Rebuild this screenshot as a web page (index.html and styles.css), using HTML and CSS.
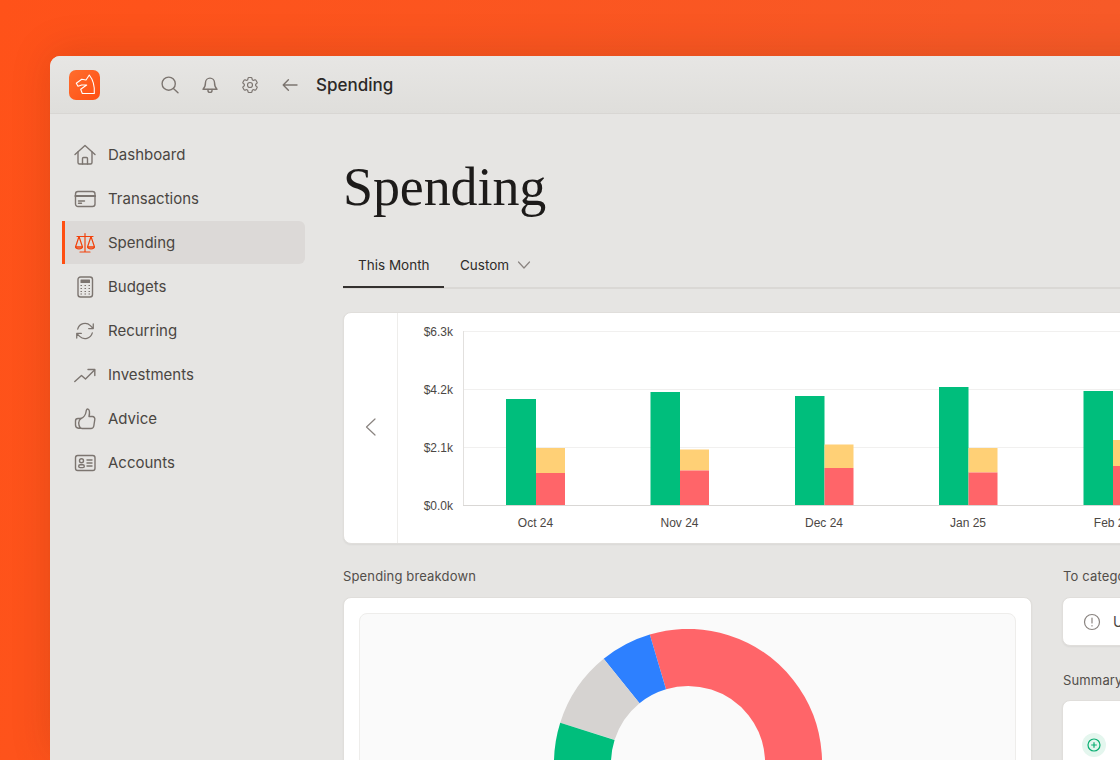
FILE: index.html
```html
<!DOCTYPE html>
<html>

<head>
  <meta charset="utf-8">
  <title>Spending</title>
  <link rel="stylesheet" href="styles.css">
</head>

<body>
  <div class="window">
    <header class="titlebar">
      <div class="logo">
        <svg width="31" height="30" viewBox="0 0 31 30"><path d="M20.300 5 17 10 12.700 9.300 7.300 13.300 9 16.300 12.700 15 17.700 15 11.700 19.300 13.300 23.500H25.300C25.800 16 24.300 10 20.300 5Z" fill="none" stroke="#fff" stroke-width="1.100" stroke-linejoin="round"/></svg>
      </div>
      <div class="tools">
        <svg class="icon" width="20" height="20" viewBox="0 0 20 20"><circle cx="8.700" cy="8.700" r="6.600"/><path d="M13.400 13.500 18 17.800"/></svg>
        <svg class="icon" width="20" height="20" viewBox="0 0 20 20"><path d="M3 14.200c1.800-1.600 2.500-3.400 2.500-6.600a4.500 4.500 0 0 1 9 0c0 3.200.7 5 2.500 6.600Z"/><path d="M8 14.400v1a2 2 0 0 0 4 0v-1"/></svg>
        <svg class="icon" width="20" height="20" viewBox="0 0 24 24"><path d="M9.594 3.940c.09-.542.56-.94 1.110-.94h2.593c.55 0 1.020.398 1.110.94l.213 1.281c.063.374.313.686.645.87.074.04.147.083.22.127.325.196.72.257 1.075.124l1.217-.456a1.125 1.125 0 0 1 1.370.49l1.296 2.247a1.125 1.125 0 0 1-.26 1.431l-1.003.827c-.293.241-.438.613-.43.992a7.723 7.723 0 0 1 0 .255c-.008.378.137.75.43.991l1.004.827c.424.35.534.955.26 1.430l-1.298 2.247a1.125 1.125 0 0 1-1.369.491l-1.217-.456c-.355-.133-.75-.072-1.076.124a6.470 6.470 0 0 1-.22.128c-.331.183-.581.495-.644.869l-.213 1.281c-.09.543-.56.94-1.110.94h-2.594c-.55 0-1.019-.398-1.110-.94l-.213-1.281c-.062-.374-.312-.686-.644-.87a6.520 6.520 0 0 1-.22-.127c-.325-.196-.72-.257-1.076-.124l-1.217.456a1.125 1.125 0 0 1-1.369-.49l-1.297-2.247a1.125 1.125 0 0 1 .26-1.431l1.004-.827c.292-.24.437-.613.43-.991a6.932 6.932 0 0 1 0-.255c.007-.38-.138-.751-.43-.992l-1.004-.827a1.125 1.125 0 0 1-.26-1.430l1.297-2.247a1.125 1.125 0 0 1 1.370-.491l1.216.456c.356.133.751.072 1.076-.124.072-.044.146-.086.22-.128.332-.183.582-.495.644-.869l.214-1.280Z"/><circle cx="12" cy="12" r="3"/></svg>
        <svg class="icon" width="20" height="20" viewBox="0 0 20 20"><path d="M17 10H3.200M8.400 4.800 3.200 10l5.200 5.200"/></svg>
      </div>
      <div class="page-name">Spending</div>
    </header>

    <div class="layout">
      <nav class="sidebar">
        <a class="nav-item">
          <svg class="icon" width="22" height="22" viewBox="0 0 22 22"><path d="M1 10.500 11 1.500l10 9"/><path d="M4 8v10.500A1.500 1.500 0 0 0 5.500 20h11a1.500 1.500 0 0 0 1.500-1.500V8"/><path d="M8.500 20v-5.500a1 1 0 0 1 1-1h3a1 1 0 0 1 1 1V20"/></svg>
          Dashboard
        </a>
        <a class="nav-item">
          <svg class="icon" width="22" height="22" viewBox="0 0 22 22"><rect x="1.500" y="3.500" width="19.500" height="15" rx="2.500"/><path d="M1.500 8h19.500" stroke-width="2.200"/><path d="M4.500 13h6M4.500 15.200h3"/></svg>
          Transactions
        </a>
        <a class="nav-item active">
          <svg class="icon" width="22" height="22" viewBox="0 0 22 22"><path d="M11 1.500v18M3 4.500h16M6 20h10"/><path d="M5 4.500 1.500 15h7ZM17 4.500 13.500 15h7Z"/><path d="M1.500 15c.4 2.600 6.600 2.600 7 0ZM13.500 15c.4 2.600 6.600 2.600 7 0Z"/></svg>
          Spending
        </a>
        <a class="nav-item">
          <svg class="icon" width="22" height="22" viewBox="0 0 22 22"><rect x="4" y="1" width="14.500" height="20" rx="2.500"/><rect class="fill" x="6.500" y="3.500" width="9.500" height="3.500" rx=".5"/><path class="dots" d="M6.500 9.500h1.500M10.500 9.500h1.500M14.500 9.500h1.500M6.500 12.500h1.500M10.500 12.500h1.500M14.500 12.500h1.500M6.500 15.500h1.500M10.500 15.500h1.500M14.500 15.500h1.500M6.500 18h1.500M10.500 18h1.500M14.500 18h1.500"/></svg>
          Budgets
        </a>
        <a class="nav-item">
          <svg class="icon" width="22" height="22" viewBox="0 0 24 24"><path d="M16.023 9.348h4.992v-.001M2.985 19.644v-4.992m0 0h4.992m-4.993 0 3.181 3.183a8.250 8.250 0 0 0 13.803-3.700M4.031 9.865a8.250 8.250 0 0 1 13.803-3.700l3.181 3.182m0-4.991v4.990"/></svg>
          Recurring
        </a>
        <a class="nav-item">
          <svg class="icon" width="22" height="22" viewBox="0 0 22 22"><path d="M.8 17.500 7.500 11.500l4 3.500 9-9"/><path d="M14 5.500h6.800v6"/></svg>
          Investments
        </a>
        <a class="nav-item">
          <svg class="icon" width="22" height="22" viewBox="0 0 22 22"><path d="M7 10.500c2.500-1 4.500-3.500 5-6.500.3-2 .5-3 1.500-3 2 0 2.500 3 1.500 7.500h3.500a2.500 2.500 0 0 1 2.300 3l-1 6.500a3 3 0 0 1-3 2.500H9c-1.500 0-2.500-.8-3.500-.8"/><path d="M7 10.500H4A2.500 2.500 0 0 0 1.500 13v4a3.200 3.200 0 0 0 3 3.200h1.800C5.200 18.500 4.700 17 4.700 15s.8-3.500 2.300-4.500Z"/></svg>
          Advice
        </a>
        <a class="nav-item">
          <svg class="icon" width="22" height="22" viewBox="0 0 22 22"><rect x="1.500" y="3.500" width="19.500" height="15" rx="2.200"/><circle cx="7.500" cy="8.700" r="2"/><rect x="4.700" y="12.800" width="5.600" height="2.800" rx="1.400"/><path d="M13 8h5M13 11h5M13 14h5"/></svg>
          Accounts
        </a>
      </nav>

      <main class="content">
        <h1 class="title">Spending</h1>

        <div class="tabs">
          <div class="tab selected">This Month</div>
          <div class="tab">
            Custom
            <svg class="icon thin" width="14" height="14" viewBox="0 0 14 14"><path d="M1.500 4 7 10 12.500 4"/></svg>
          </div>
        </div>

        <section class="card chart-card">
          <div class="chart-prev">
            <svg class="icon thin" width="12" height="20" viewBox="0 0 12 20"><path d="M10 2 1.500 10 10 18"/></svg>
          </div>
          <!-- viewBox is in page px so bars are easy to read off -->
          <svg class="chart" width="944" height="230" viewBox="398 313 944 230">
            <path class="grid" d="M463 331.500H1342M463 389.500H1342M463 447.500H1342"/>
            <path class="axis" d="M463.500 331V505"/>
            <text class="y-label" x="453" y="336">$6.3k</text>
            <text class="y-label" x="453" y="394">$4.2k</text>
            <text class="y-label" x="453" y="452">$2.1k</text>
            <text class="y-label" x="453" y="510">$0.0k</text>

            <rect class="green" x="506" y="399" width="30" height="106"/>
            <rect class="yellow" x="536" y="448" width="29" height="25"/>
            <rect class="red" x="536" y="473" width="29" height="32"/>
            <text class="x-label" x="535.500" y="527">Oct 24</text>

            <rect class="green" x="650.500" y="392" width="29.500" height="113"/>
            <rect class="yellow" x="680" y="449.500" width="29" height="21"/>
            <rect class="red" x="680" y="470.500" width="29" height="34.500"/>
            <text class="x-label" x="679.500" y="527">Nov 24</text>

            <rect class="green" x="795" y="396" width="29.500" height="109"/>
            <rect class="yellow" x="824.500" y="444.500" width="29" height="23.500"/>
            <rect class="red" x="824.500" y="468" width="29" height="37"/>
            <text class="x-label" x="824" y="527">Dec 24</text>

            <rect class="green" x="939" y="387" width="29.500" height="118"/>
            <rect class="yellow" x="968.500" y="448" width="29" height="24.500"/>
            <rect class="red" x="968.500" y="472.500" width="29" height="32.500"/>
            <text class="x-label" x="968" y="527">Jan 25</text>

            <rect class="green" x="1083.500" y="391" width="29.500" height="114"/>
            <rect class="yellow" x="1113" y="440" width="29" height="26"/>
            <rect class="red" x="1113" y="466" width="29" height="39"/>
            <text class="x-label" x="1112.500" y="527">Feb 25</text>

            <path class="baseline" d="M463 505.500H1342"/>
          </svg>
        </section>

        <div class="lower">
          <div>
            <div class="section-label">Spending breakdown</div>
            <section class="card breakdown">
              <div class="donut-panel">
                <svg class="donut" width="268" height="268" viewBox="0 0 268 268">
                  <path stroke="#ff6569" d="M103.900 32.900A105.500 105.500 0 0 1 225.400 186.800"/>
                  <path stroke="#2d80ff" d="M103.900 32.900A105.500 105.500 0 0 0 67.600 52"/>
                  <path stroke="#d6d3d1" d="M67.600 52A105.500 105.500 0 0 0 33.400 102.300"/>
                  <path stroke="#00be7c" d="M33.400 102.300A105.500 105.500 0 0 0 42.600 186.800"/>
                </svg>
              </div>
            </section>
          </div>

          <div class="side">
            <div class="section-label">To categorize</div>
            <section class="card todo">
              <svg class="icon thin" width="18" height="18" viewBox="0 0 18 18"><circle cx="9" cy="9" r="7.500"/><path d="M9 5v5M9 12.500v.5"/></svg>
              Uncategorized
            </section>
            <div class="section-label summary-label">Summary</div>
            <section class="card summary">
              <div class="plus-badge">
                <svg width="14" height="14" viewBox="0 0 14 14"><circle cx="7" cy="7" r="6"/><path d="M7 4.200v5.600M4.200 7h5.600"/></svg>
              </div>
            </section>
          </div>
        </div>
      </main>
    </div>
  </div>
</body>

</html>
```

FILE: styles.css
```css
body {
  margin: 0;
  height: 760px;
  padding: 56px 0 0 50px;
  box-sizing: border-box;
  overflow: hidden;
  background: linear-gradient(100deg, #ff5219, #f65b2a);
  font-family: Inter, "Liberation Sans", sans-serif;
  color: #4a4642;
}

.window {
  width: 1400px;
  height: 704px;
  overflow: hidden;
  background-color: #e6e5e3;
  border-radius: 10px 0 0 0;
  box-shadow: 0 -4px 40px rgba(90, 30, 0, 0.16);
}

.icon {
  flex: none;
  fill: none;
  stroke: #7c7570;
  stroke-width: 1.4;
  stroke-linecap: round;
  stroke-linejoin: round;
}

.icon.thin {
  stroke: #8a8480;
  stroke-width: 1.2;
}

.icon .fill {
  fill: #7c7570;
  stroke: none;
}

.icon .dots {
  stroke-width: 1.2;
  stroke-linecap: butt;
}

/* top bar */
.titlebar {
  display: flex;
  align-items: center;
  box-sizing: border-box;
  height: 58px;
  padding-left: 19px;
  background: linear-gradient(#e7e6e4, #dfdedb);
  border-bottom: 1px solid #d8d6d3;
}

.logo {
  display: flex;
  width: 31px;
  height: 30px;
  border-radius: 7px;
  background: linear-gradient(135deg, #ff6d2e, #ff4f12);
}

.tools {
  display: flex;
  gap: 20px;
  margin-left: 60px;
}

.page-name {
  margin-left: 16px;
  font-size: 17px;
  font-weight: 500;
  color: #2b2927;
}

/* sidebar */
.layout {
  display: flex;
}

.sidebar {
  flex: none;
  display: flex;
  flex-direction: column;
  gap: 1px;
  box-sizing: border-box;
  width: 293px;
  padding: 19px 38px 0 12px;
}

.nav-item {
  display: flex;
  align-items: center;
  gap: 12px;
  height: 43px;
  padding-left: 9px;
  border-left: 3px solid transparent;
  border-radius: 0 6px 6px 0;
  font-size: 15px;
}

.nav-item.active {
  background-color: #dcd9d7;
  border-left-color: #ff4f12;
}

.nav-item.active .icon {
  stroke: #f2420c;
  stroke-width: 1.2;
}

/* main column */
.content {
  flex: none;
  width: 1000px;
}

.title {
  margin: 43px 0 25px;
  font-family: "Liberation Serif", serif;
  font-size: 54px;
  font-weight: 400;
  line-height: 60px;
  letter-spacing: -0.1px;
  color: #1d1b1a;
}

.tabs {
  display: flex;
  gap: 1px;
  height: 45px;
  border-bottom: 2px solid #dad8d5;
}

.tab {
  display: flex;
  align-items: center;
  gap: 8px;
  height: 46px;
  padding: 0 15px;
  font-size: 13.5px;
  color: #2f2c2a;
}

.tab.selected {
  box-sizing: border-box;
  width: 101px;
  padding-top: 2px;
  white-space: nowrap;
  border-bottom: 2px solid #34312f;
}

.card {
  background-color: #fff;
  border: 1px solid #e0dedb;
  border-radius: 8px;
  box-shadow: 0 1px 2px rgba(0, 0, 0, 0.06);
}

.chart-card {
  display: flex;
  height: 230px;
  margin-top: 23px;
}

.chart-prev {
  flex: none;
  display: flex;
  align-items: center;
  justify-content: center;
  box-sizing: border-box;
  width: 54px;
  padding-bottom: 2px;
  border-right: 1px solid #eeedeb;
}

.chart {
  display: block;
}

.chart text {
  font-family: "Liberation Sans", sans-serif;
  font-size: 12px;
  fill: #4b4744;
}

.chart .y-label {
  text-anchor: end;
}

.chart .x-label {
  text-anchor: middle;
}

.grid {
  fill: none;
  stroke: #f1f0ef;
}

.axis {
  fill: none;
  stroke: #e2e0de;
}

.baseline {
  fill: none;
  stroke: #d9d7d5;
}

.green {
  fill: #00be7c;
}

.yellow {
  fill: #ffd076;
}

.red {
  fill: #ff6569;
}

/* lower part */
.lower {
  display: grid;
  grid-template-columns: 689px 281px;
  gap: 30px;
  margin-top: 24px;
}

.section-label {
  margin-bottom: 13px;
  font-size: 13px;
  line-height: 16px;
  letter-spacing: 0.15px;
  color: #524e4a;
}

.side .section-label {
  margin-left: 1px;
}

.side .summary-label {
  margin-bottom: 12px;
}

.breakdown {
  height: 400px;
  padding: 15px;
  box-sizing: border-box;
}

.donut-panel {
  display: flex;
  justify-content: center;
  height: 300px;
  padding-top: 15px;
  background-color: #fafafa;
  border: 1px solid #eeedeb;
  border-radius: 8px;
}

.donut path {
  fill: none;
  stroke-width: 57;
}

.todo {
  display: flex;
  align-items: center;
  gap: 12px;
  height: 47px;
  margin-bottom: 26px;
  padding-left: 20px;
  font-size: 14px;
}

.summary {
  height: 200px;
  padding: 32px 0 0 19px;
  box-sizing: border-box;
}

.plus-badge {
  display: flex;
  align-items: center;
  justify-content: center;
  width: 24px;
  height: 24px;
  border-radius: 50%;
  background-color: #e4f6ee;
}

.plus-badge svg {
  fill: none;
  stroke: #0aae72;
  stroke-width: 1.2;
}
```
